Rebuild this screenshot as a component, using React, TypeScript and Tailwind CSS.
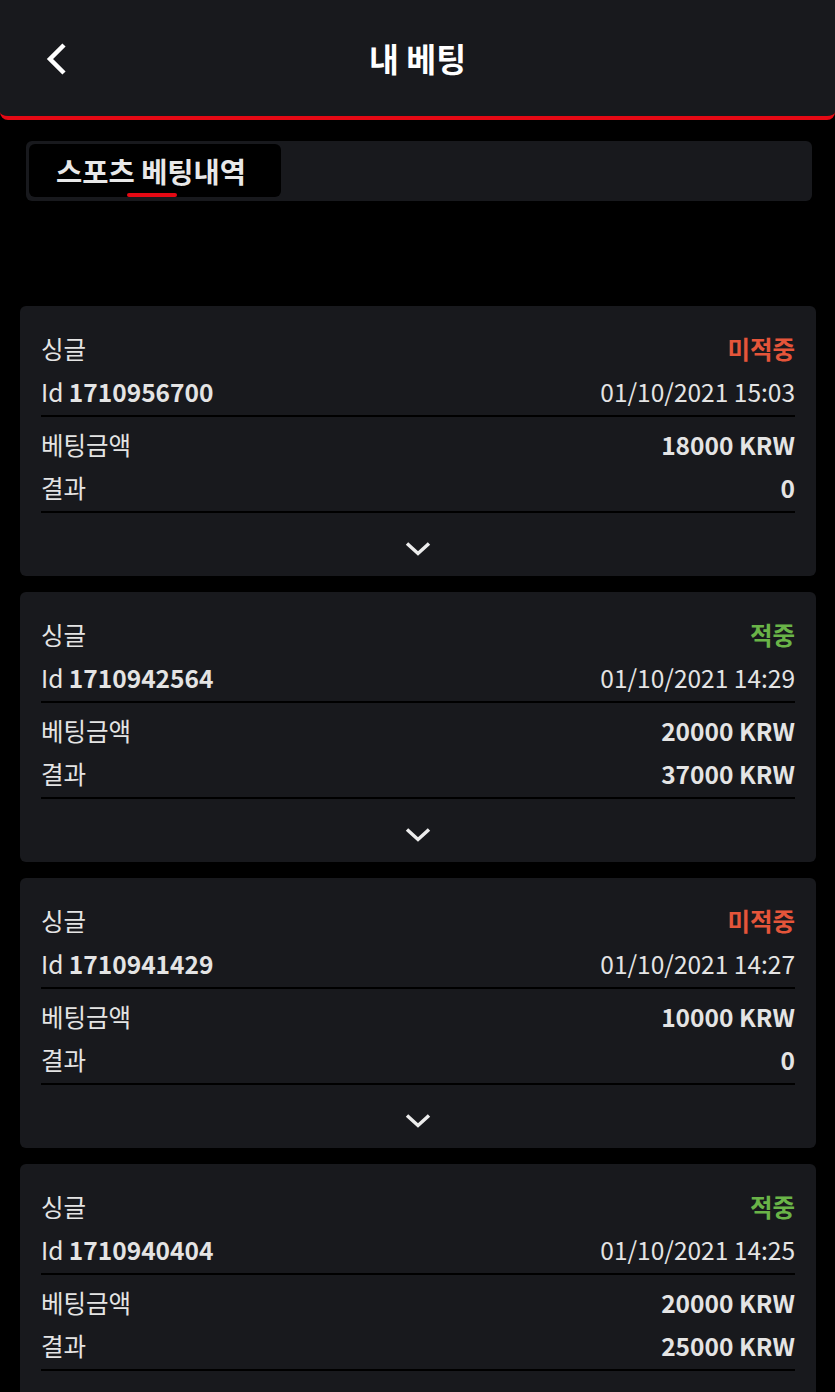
import React from "react";

type Bet = {
  id: string;
  won: boolean;
  date: string;
  stake: string;
  result: string;
};

const bets: Bet[] = [
  { id: "1710956700", won: false, date: "01/10/2021 15:03", stake: "18000 KRW", result: "0" },
  { id: "1710942564", won: true, date: "01/10/2021 14:29", stake: "20000 KRW", result: "37000 KRW" },
  { id: "1710941429", won: false, date: "01/10/2021 14:27", stake: "10000 KRW", result: "0" },
  { id: "1710940404", won: true, date: "01/10/2021 14:25", stake: "20000 KRW", result: "25000 KRW" },
];

const font = "font-['Noto_Sans_CJK_KR','Noto_Sans',sans-serif]";

function BetCard({ bet }: { bet: Bet }) {
  return (
    <div className="rounded-md bg-[#18191d] px-[21px] pt-[21px] text-[24.5px] text-[#e4e4e4]">
      {/* Type + status */}
      <div className="flex h-[44px] items-center justify-between">
        <span>싱글</span>
        <span
          className={`font-bold ${bet.won ? "text-[#6ab448]" : "text-[#e5553a]"}`}
        >
          {bet.won ? "적중" : "미적중"}
        </span>
      </div>
      <div className="flex h-[46px] items-center justify-between border-b-2 border-black pb-[2px]">
        <span>
          Id <span className="font-bold">{bet.id}</span>
        </span>
        <span>{bet.date}</span>
      </div>

      {/* Amounts */}
      <div className="mt-[6px] flex h-[44px] items-center justify-between">
        <span>베팅금액</span>
        <span className="font-bold">{bet.stake}</span>
      </div>
      <div className="flex h-[46px] items-center justify-between border-b-2 border-black pb-[2px]">
        <span>결과</span>
        <span className="font-bold">{bet.result}</span>
      </div>

      <div className="flex h-[63px] items-center justify-center pt-[9px]">
        <svg width="28" height="18" viewBox="0 0 28 18" fill="none">
          <path
            d="M3 3.5l11 10L25 3.5"
            stroke="#ececec"
            strokeWidth="3.5"
          />
        </svg>
      </div>
    </div>
  );
}

export default function App() {
  return (
    <div className={`min-h-[1392px] w-full bg-black ${font}`}>
      {/* Header */}
      <header className="rounded-b-lg border-b-4 border-[#e50914] bg-[#18191d]">
        <div className="relative flex h-[116px] items-center justify-center">
          <button className="absolute left-[40px] top-[38px] p-1" aria-label="뒤로">
            <svg width="24" height="34" viewBox="0 0 24 34" fill="none">
              <path d="M20 3L6 17l14 14" stroke="#ffffff" strokeWidth="4.5" />
            </svg>
          </button>
          <h1 className="text-[32.5px] font-bold text-white">내 베팅</h1>
        </div>
      </header>

      {/* Tabs */}
      <div className="ml-[26px] mr-[23px] mt-[21px] rounded-md bg-[#18191d] p-[3px] pb-[4px] pr-0">
        <div className="flex h-[53px] w-[252px] flex-col items-start rounded-md bg-black pl-[27px]">
          <span className="mt-[13px] text-[28.5px] font-bold leading-none text-[#e8e8e8]">
            스포츠 베팅내역
          </span>
          <span className="mt-[7px] ml-[71px] h-[4px] w-[50px] shrink-0 rounded-sm bg-[#e50914]" />
        </div>
      </div>

      {/* Bet list */}
      <div className="mt-[105px] flex flex-col gap-[16px] px-[20px] pr-[19px]">
        {bets.map((b) => (
          <BetCard key={b.id} bet={b} />
        ))}
      </div>
    </div>
  );
}
